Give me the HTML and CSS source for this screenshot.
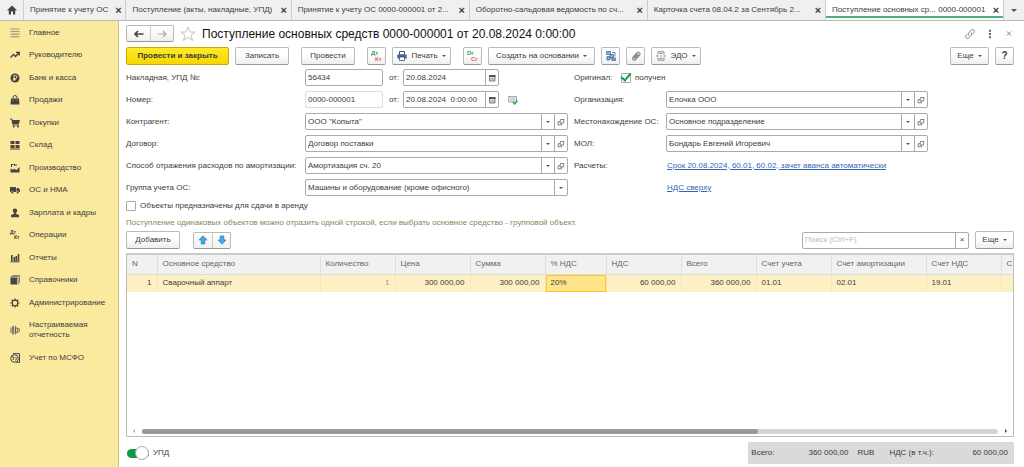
FILE: index.html
```html
<!DOCTYPE html>
<html lang="ru">
<head>
<meta charset="utf-8">
<title>Поступление основных средств 0000-000001</title>
<meta name="viewport" content="width=device-width, initial-scale=1">
<link rel="stylesheet" href="styles.css">
</head>
<body>
<svg class="sprite" aria-hidden="true">
  <symbol id="i-open" viewBox="0 0 8 8"><path d="M3.500 1.500H7L6.500 5H3zM2.800 3.500H1.300L1 6.800h3.500L4.800 5" fill="none" stroke="#666" stroke-width=".8"/></symbol>
  <symbol id="i-cal" viewBox="0 0 8 8"><path d="M1.500 1.500h5.500v5.500h-5.500z" fill="#ddd" stroke="#666" stroke-width=".8"/><path d="M1 1h6.500v2H1z" fill="#555"/><path d="M2.500 4.500h4M2.500 5.800h4" stroke="#888" stroke-width=".5"/></symbol>
</svg>
<nav class="tabs">
  <button class="tab-home" aria-label="Начальная страница"><svg class="ico" viewBox="0 0 10 10"><path d="M5 .5L.3 5l.7.7.8-.7V9.500h2.200V6.500h2v3h2.200V5l.8.7.7-.7z" fill="#444"/></svg></button>
  <div class="tab t1"><a href="#">Принятие к учету ОС</a><button class="x" aria-label="Закрыть">×</button></div>
  <div class="tab t2"><a href="#">Поступление (акты, накладные, УПД)</a><button class="x" aria-label="Закрыть">×</button></div>
  <div class="tab t3"><a href="#">Принятие к учету ОС 0000-000001 от 2...</a><button class="x" aria-label="Закрыть">×</button></div>
  <div class="tab t3"><a href="#">Оборотно-сальдовая ведомость по сч...</a><button class="x" aria-label="Закрыть">×</button></div>
  <div class="tab t3"><a href="#">Карточка счета 08.04.2 за Сентябрь 2...</a><button class="x" aria-label="Закрыть">×</button></div>
  <div class="tab t3 active"><a href="#">Поступление основных ср... 0000-000001</a><button class="x" aria-label="Закрыть">×</button></div>
  <button class="tab-more" aria-label="Все вкладки"><span class="caret big"></span></button>
</nav>
<div class="shell">
  <aside class="side">
    <a href="#"><svg class="ico" viewBox="0 0 10 10"><path d="M.5 1h9M.5 3.600h9M.5 6.200h9M.5 8.800h9" stroke="#777" stroke-width=".8"/></svg>Главное</a>
    <a href="#"><svg class="ico" viewBox="0 0 10 10"><path d="M.5 7.500L3.500 4.500l2 2L9 3M6 2.500h3.300v3" fill="none" stroke="#444" stroke-width="1.300"/></svg>Руководителю</a>
    <a href="#"><svg class="ico" viewBox="0 0 10 10"><circle cx="5" cy="5" r="4.500" fill="#444"/><path d="M4 8V2.500h1.500a1.400 1.400 0 0 1 0 3H3M3 6.700h3" fill="none" stroke="#faea9e" stroke-width=".9"/></svg>Банк и касса</a>
    <a href="#"><svg class="ico" viewBox="0 0 10 10"><path d="M1 3.500h8l.5 6h-9z" fill="#444"/><path d="M3 5V2.500a2 2 0 0 1 4 0V5" fill="none" stroke="#444"/><path d="M3 4.500v1M7 4.500v1" stroke="#faea9e" stroke-width=".7"/></svg>Продажи</a>
    <a href="#"><svg class="ico" viewBox="0 0 10 10"><path d="M0 1h1.800L3 7h6" fill="none" stroke="#444"/><path d="M2 2h8L8.800 6H2.800z" fill="#444"/><circle cx="3.700" cy="8.600" r="1" fill="#444"/><circle cx="8" cy="8.600" r="1" fill="#444"/></svg>Покупки</a>
    <a href="#"><svg class="ico" viewBox="0 0 10 10"><path d="M.5 1h4v3h-4zM5.500 1h4v3h-4zM.5 5h4v3h-4zM5.500 5h4v3h-4zM0 8.600h10v.9H0z" fill="#444"/></svg>Склад</a>
    <a href="#"><svg class="ico" viewBox="0 0 10 10"><path d="M.5 9.500V5.500L3.500 7V5.500l3 1.500L9.500 4v5.500z" fill="#444"/><path d="M1.500 4V1M1 1.500h2.500M4.500 1v2M5 2h2" stroke="#444"/></svg>Производство</a>
    <a href="#"><svg class="ico" viewBox="0 0 10 10"><path d="M0 2h6v5H0zM6.500 3h2L10 5v2H6.500z" fill="#444"/><circle cx="2.300" cy="7.500" r="1.200" fill="#444" stroke="#faea9e" stroke-width=".5"/><circle cx="7.700" cy="7.500" r="1.200" fill="#444" stroke="#faea9e" stroke-width=".5"/></svg>ОС и НМА</a>
    <a href="#"><svg class="ico" viewBox="0 0 10 10"><circle cx="5" cy="2.800" r="2.200" fill="#444"/><path d="M4 4.500h2v1.200l3 1.300v2.200H1V7l3-1.300z" fill="#444"/></svg>Зарплата и кадры</a>
    <a href="#"><span class="ops" aria-hidden="true"><i>Дт</i><i>Кт</i></span>Операции</a>
    <a href="#"><svg class="ico" viewBox="0 0 10 10"><path d="M1.800 2v6M4.300 4v4M6.300 3v5M8.500 1v7" stroke="#444" stroke-width="1.600"/><path d="M.5 8.800h9" stroke="#444"/></svg>Отчеты</a>
    <a href="#"><svg class="ico" viewBox="0 0 10 10"><path d="M.5 2.500h6.500v7H.5z" fill="#444"/><path d="M.5 2.300L2.500.5h7v7L7.500 9.500M1.500 1.600H8v7" fill="none" stroke="#666" stroke-width=".8"/></svg>Справочники</a>
    <a href="#"><svg class="ico" viewBox="0 0 10 10"><circle cx="5" cy="5" r="2.800" fill="none" stroke="#444" stroke-width="1.200"/><path d="M5 .4v1.800M5 7.800v1.800M.4 5h1.800M7.800 5h1.800M1.700 1.700L3 3M7 7l1.300 1.300M8.300 1.700L7 3M3 7L1.700 8.300" stroke="#444" stroke-width="1.200"/></svg>Администрирование</a>
    <a href="#" class="two"><svg class="ico" viewBox="0 0 10 10"><path d="M1 2.500v5.500M3 1c-.8 2-.8 6.500 0 8.500.8-2 .8-6.500 0-8.500zM5.300.8v8.700M5.500 2.500L9.300 4v2.500L5.500 8zM7.300 3v4.500" fill="none" stroke="#555" stroke-width=".8"/></svg>Настраиваемая отчетность</a>
    <a href="#"><svg class="ico" viewBox="0 0 10 10"><circle cx="4.500" cy="5.500" r="3.800" fill="none" stroke="#444"/><path d="M3 .6h6.500v8.800H6.500M2 3.500l2 1-1 2.500M5.500 4l1 1.500-1 2" fill="none" stroke="#444"/></svg>Учет по МСФО</a>
  </aside>
  <main class="doc">
    <header class="head">
      <div class="pair nav">
        <button aria-label="Назад"><svg class="arr" viewBox="0 0 10 8"><path d="M9.500 4H1M4 1L1 4l3 3" fill="none" stroke="#444" stroke-width="1.600"/></svg></button>
        <button aria-label="Вперед"><svg class="arr" viewBox="0 0 10 8"><path d="M.5 4H9M6 1l3 3-3 3" fill="none" stroke="#aaa" stroke-width="1.200"/></svg></button>
      </div>
      <button class="bare star" aria-label="В избранное"><svg viewBox="0 0 16 16"><path d="M8 1l2 5h5l-4 3.300 1.500 5.200L8 11.400l-4.500 3.100L5 9.300 1 6h5z" fill="none" stroke="#bbb" stroke-width=".9"/></svg></button>
      <h1>Поступление основных средств 0000-000001 от 20.08.2024 0:00:00</h1>
      <div class="wincmd">
        <button class="bare" aria-label="Ссылка"><svg class="ico link" viewBox="0 0 12 12"><path d="M5 7.500a2 2 0 0 1 0-3l2-2.200c2-2 4.500.4 2.800 2.400L8.500 6M7 4.500a2 2 0 0 1 0 3L5 9.700C3 11.700.5 9.300 2.200 7.300L3.500 6" fill="none" stroke="#777" stroke-width=".9"/></svg></button>
        <button class="bare" aria-label="Меню"><svg class="ico" viewBox="0 0 10 10"><path d="M4 .8h2v2H4zM4 4h2v2H4zM4 7.200h2v2H4z" fill="#666"/></svg></button>
        <button class="bare" aria-label="Закрыть"><svg class="ico" viewBox="0 0 10 10"><path d="M3 2.500l4 4M7 2.500l-4 4" stroke="#777" stroke-width=".9"/></svg></button>
      </div>
    </header>
    <div class="bar">
      <button class="btn primary">Провести и закрыть</button>
      <button class="btn b-save">Записать</button>
      <button class="btn b-post">Провести</button>
      <button class="btn sq dk" aria-label="Дт/Кт"><i>Дт</i><i>Кт</i></button>
      <button class="btn b-print"><svg class="ico" viewBox="0 0 10 10"><path d="M2.500.5h5V4h-5z" fill="#fff" stroke="#357"/><path d="M.3 3.500h9.400v4H.3z" fill="#47698f"/><path d="M2.500 6h5v3.500h-5z" fill="#fff" stroke="#357" stroke-width=".8"/></svg>Печать<span class="caret"></span></button>
      <button class="btn sq dk" aria-label="Dr/Cr"><i>Dr</i><i>Cr</i></button>
      <button class="btn b-base">Создать на основании<span class="caret"></span></button>
      <button class="btn sq" aria-label="Структура"><svg class="ico" viewBox="0 0 10 10"><path d="M.5.5h4v3h-4zM4 3.500h3.500v3H4zM6 7h3.500v2.500H6zM1 5.500h2.500V9H1z" fill="#8bb4d8" stroke="#3d6f9e" stroke-width=".8"/><path d="M6 1.500h3v4M3.500 8H6" fill="none" stroke="#3d6f9e" stroke-width=".8"/></svg></button>
      <button class="btn sq" aria-label="Файлы"><svg class="ico" viewBox="0 0 10 10"><path d="M1.500 7L6 1.800c1.500-1.500 4 .3 2.600 2.200L4.500 8.500C3 10 .8 8.600 2 7l4-4.500M3.500 7.500L7.300 3" fill="none" stroke="#888" stroke-width="1.200"/></svg></button>
      <button class="btn b-edo"><svg class="ico" viewBox="0 0 10 10"><path d="M2 3.500V.8h6v2.700M2 6.500v2.700h6V6.500M0 5h2.500M4 5h2M7.500 5H10M3.500 2.500h3M3.500 7.500h3" fill="none" stroke="#888"/></svg>ЭДО<span class="caret"></span></button>
      <span class="grow"></span>
      <button class="btn more">Еще<span class="caret"></span></button>
      <button class="btn sq q">?</button>
    </div>

    <form class="form">
      <label for="inv">Накладная, УПД №:</label>
      <div class="duo"><input id="inv" class="field" value="56434"><label for="invd">от:</label><span class="box"><input id="invd" value="20.08.2024"><button type="button" aria-label="Календарь"><svg class="mini"><use href="#i-cal"/></svg></button></span></div>
      <span class="lab">Оригинал:</span>
      <label class="chk orig"><input type="checkbox" checked><span>получен</span></label>

      <label for="num">Номер:</label>
      <div class="duo"><input id="num" class="field pale" value="0000-000001"><label for="numd">от:</label><span class="box"><input id="numd" value="20.08.2024  0:00:00"><button type="button" aria-label="Календарь"><svg class="mini"><use href="#i-cal"/></svg></button></span><svg class="ico stat" viewBox="0 0 10 10"><path d="M.5 1.500h8v5.500h-8z" fill="#e3eaf1" stroke="#9ab"/><path d="M2 3.300h5M2 5h5" stroke="#9ab" stroke-width=".6"/><path d="M5 7l1.700 2L9.500 5.500" fill="none" stroke="#2fae4e" stroke-width="1.500"/></svg></div>
      <label for="org">Организация:</label>
      <div class="box"><span class="pick"><select id="org"><option>Елочка ООО</option></select><span class="drop"></span></span><button type="button" aria-label="Открыть"><svg class="mini"><use href="#i-open"/></svg></button></div>

      <label for="ctr">Контрагент:</label>
      <div class="box"><span class="pick"><select id="ctr"><option>ООО "Копыта"</option></select><span class="drop"></span></span><button type="button" aria-label="Открыть"><svg class="mini"><use href="#i-open"/></svg></button></div>
      <label for="loc">Местонахождение ОС:</label>
      <div class="box"><span class="pick"><select id="loc"><option>Основное подразделение</option></select><span class="drop"></span></span><button type="button" aria-label="Открыть"><svg class="mini"><use href="#i-open"/></svg></button></div>

      <label for="dog">Договор:</label>
      <div class="box"><span class="pick"><select id="dog"><option>Договор поставки</option></select><span class="drop"></span></span><button type="button" aria-label="Открыть"><svg class="mini"><use href="#i-open"/></svg></button></div>
      <label for="mol">МОЛ:</label>
      <div class="box"><span class="pick"><select id="mol"><option>Бондарь Евгений Игоревич</option></select><span class="drop"></span></span><button type="button" aria-label="Открыть"><svg class="mini"><use href="#i-open"/></svg></button></div>

      <label for="exp">Способ отражения расходов по амортизации:</label>
      <div class="box"><span class="pick"><select id="exp"><option>Амортизация сч. 20</option></select><span class="drop"></span></span><button type="button" aria-label="Открыть"><svg class="mini"><use href="#i-open"/></svg></button></div>
      <span class="lab">Расчеты:</span>
      <a class="lnk" href="#">Срок 20.08.2024, 60.01, 60.02, зачет аванса автоматически</a>

      <label for="grp">Группа учета ОС:</label>
      <div class="box"><span class="pick"><select id="grp"><option>Машины и оборудование (кроме офисного)</option></select><span class="drop"></span></span></div>
      <span class="lab"></span>
      <a class="lnk" href="#">НДС сверху</a>
    </form>
    <label class="chk rent"><input type="checkbox"><span>Объекты предназначены для сдачи в аренду</span></label>
    <p class="hint">Поступление одинаковых объектов можно отразить одной строкой, если выбрать основное средство - групповой объект.</p>
    <div class="bar sub">
      <button class="btn b-add">Добавить</button>
      <div class="pair">
        <button aria-label="Вверх"><svg class="ico" viewBox="0 0 10 10"><path d="M5 .8l4 4.200H6.800V9H3.200V5H1z" fill="#3fa9ea" stroke="#2a7fb8" stroke-width=".7"/></svg></button>
        <button aria-label="Вниз"><svg class="ico" viewBox="0 0 10 10"><path d="M5 9.200L1 5h2.200V1h3.600v4H9z" fill="#3fa9ea" stroke="#2a7fb8" stroke-width=".7"/></svg></button>
      </div>
      <span class="grow"></span>
      <span class="box search"><input type="search" aria-label="Поиск" placeholder="Поиск (Ctrl+F)"><button type="button" aria-label="Очистить">×</button></span>
      <button class="btn more">Еще<span class="caret"></span></button>
    </div>
    <section class="grid">
      <table>
        <colgroup><col class="c30"><col><col class="c75"><col class="c75"><col class="c75"><col class="c61"><col class="c75"><col class="c75"><col class="c75"><col class="c95"><col class="c75"><col class="c12"></colgroup>
        <thead><tr><th>N</th><th>Основное средство</th><th>Количество</th><th>Цена</th><th>Сумма</th><th>% НДС</th><th>НДС</th><th>Всего</th><th>Счет учета</th><th>Счет амортизации</th><th>Счет НДС</th><th>С</th></tr></thead>
        <tbody><tr><td class="r">1</td><td>Сварочный аппарт</td><td class="r dim">1</td><td class="r">300 000,00</td><td class="r">300 000,00</td><td class="cur">20%</td><td class="r">60 000,00</td><td class="r">360 000,00</td><td>01.01</td><td>02.01</td><td>19.01</td><td></td></tr></tbody>
      </table>
      <div class="scroll"><span class="al"></span><div class="track"><div class="thumb"></div></div><span class="ar"></span></div>
    </section>
    <footer class="foot">
      <label class="toggle"><input type="checkbox" role="switch" checked><span>УПД</span></label>
      <div class="totals"><span>Всего:</span><output>360 000,00</output><span class="rub">RUB</span><span>НДС (в т.ч.):</span><output>60 000,00</output></div>
    </footer>
  </main>
</div>
</body>
</html>
```
FILE: styles.css
```css
* { box-sizing: border-box; }
body {
  margin: 0;
  min-height: 100vh;
  display: flex;
  flex-direction: column;
  background: #fff;
  color: #3c3c3c;
  font: 8px/12px "Liberation Sans", Arial, sans-serif;
}
button, input, select { font: inherit; color: inherit; margin: 0; padding: 0; border: 0; background: none; }
i { font-style: normal; }
a { color: inherit; text-decoration: none; }
.sprite { display: none; }
.ico { width: 10px; height: 10px; flex: none; display: block; }
.mini { width: 8px; height: 8px; display: block; }
.grow { flex: 1; }
.caret { width: 0; height: 0; border: 2px solid transparent; border-top-color: #555; border-bottom: 0; }
.caret.big { border-width: 3px; border-bottom: 0; }

/* Window tabs */
.tabs { display: flex; height: 21px; background: #f0f0f0; border-bottom: 1px solid #bbb; }
.tab-home { width: 24px; display: grid; place-items: center; border-right: 1px solid #ccc; }
.tab { display: flex; align-items: center; justify-content: space-between; min-width: 0; border-right: 1px solid #ccc; }
.tab a { flex: 1; min-width: 0; padding-left: 6px; overflow: hidden; white-space: nowrap; }
.t1 { flex: 102 1 0; }
.t2 { flex: 165 1 0; }
.t3 { flex: 178 1 0; }
.tab.active { background: #fff; box-shadow: inset 0 -2px #fff, inset 0 -4px #4db37e; }
.x { width: 14px; font-weight: bold; font-size: 11px; }
.tab-more { width: 20px; display: grid; place-items: center; }

.shell { flex: 1; display: flex; }

/* Sections panel */
.side { width: 119px; flex: none; padding-top: 1px; background: #faea9e; border-right: 1px solid #ccc08a; }
.side a { display: flex; align-items: center; gap: 9px; height: 22px; padding: 0 4px 0 10px; line-height: 10px; }
.side a:nth-child(even) { margin-bottom: 1px; }
.side a.two { height: 32px; }
.ops { width: 10px; display: flex; flex-direction: column; font: bold 5px/5px "Liberation Sans", Arial, sans-serif; }
.ops i + i { padding-left: 4px; }

/* Document */
.doc { flex: 1; min-width: 0; display: flex; flex-direction: column; padding: 4px 10px 3px 7px; }
.head { display: flex; align-items: center; height: 17px; }
.pair { display: flex; height: 17px; border: 1px solid #bbb; border-bottom-color: #999; border-radius: 2px; background: linear-gradient(#fff, #f0f0f0); }
.pair button { width: 18px; display: grid; place-items: center; }
.pair button + button { border-left: 1px solid #ccc; }
.nav button { width: 23px; }
.arr { width: 10px; height: 8px; }
.bare { display: grid; place-items: center; }
.star { width: 28px; }
.star svg { width: 16px; height: 16px; }
h1 { flex: 1; margin: 0; color: #111; font-size: 12px; font-weight: normal; line-height: 16px; white-space: nowrap; }
.wincmd { display: flex; gap: 9px; }
.link { width: 12px; height: 12px; }

.bar { display: flex; align-items: center; gap: 6px; margin-top: 5px; }
.btn { display: flex; align-items: center; justify-content: center; gap: 4px; height: 18px; border: 1px solid #bbb; border-bottom-color: #999; border-radius: 2px; background: linear-gradient(#fff 40%, #eee); white-space: nowrap; }
.primary { width: 103px; border-color: #c9a800; background: linear-gradient(#ffe92b, #f5d800); font-weight: bold; }
.b-save { width: 54px; }
.b-post { width: 54px; margin-left: 6px; }
.b-print { width: 59px; }
.b-base { width: 107px; }
.b-edo { width: 50px; }
.more { width: 39px; }
.sq { width: 19px; }
.q { font-weight: bold; font-size: 10px; }
.dk { flex-direction: column; align-items: stretch; gap: 0; font: bold 6px/6px "Liberation Sans", Arial, sans-serif; color: #3a9c6a; text-align: left; padding-left: 3px; }
.dk i + i { color: #e06060; padding-left: 4px; }
.bar .dk { margin-left: 6px; }

/* Document fields */
.form { display: grid; grid-template-columns: 179px minmax(0, 263fr) 98px minmax(0, 262fr) 86px; grid-auto-rows: 17px; align-items: center; gap: 5px 0; margin-top: 4px; }
.form > :nth-child(4n + 1) { grid-column: 1; }
.form > :nth-child(4n + 3) { padding-left: 6px; }
.form label, .lab, .lnk { white-space: nowrap; }
.duo { display: grid; grid-template-columns: 78px 20px 96px auto; align-items: center; justify-content: start; }
.field, .box { height: 17px; border: 1px solid #aaa; border-radius: 2px; }
.field { width: 78px; padding: 0 2px; }
.pale { border-color: #ddd; }
.duo > label { padding-left: 6px; }
.stat { margin-left: 9px; }
.box { display: flex; background: #fff; }
.box input { flex: 1; min-width: 0; padding: 0 2px; white-space: pre; outline: 0; }
.box > button { width: 13px; display: grid; place-items: center; border-left: 1px solid #aaa; }
.pick { flex: 1; display: grid; grid-template-columns: 1fr 13px; }
.pick select { grid-area: 1 / 1 / 2 / 3; appearance: none; padding: 0 2px; }
.drop { grid-area: 1 / 2; display: grid; place-items: center; border-left: 1px solid #aaa; pointer-events: none; }
.drop::after { content: ""; border: 2px solid transparent; border-top-color: #555; border-bottom: 0; }
.lnk { color: #3367b5; text-decoration: underline; padding-left: 1px; }

.chk { display: flex; align-items: center; gap: 4px; }
.chk input { appearance: none; width: 10px; height: 10px; border: 1px solid #aaa; border-radius: 1px; display: grid; place-items: center; }
.chk input:checked::after { content: ""; width: 4px; height: 8px; margin-top: -4px; border: solid #12a050; border-width: 0 2px 2px 0; transform: rotate(40deg); }
.form .orig { margin-left: -45px; }
.rent { margin-top: 3px; height: 14px; }
.hint { margin: 4px 0 2px; color: #8b8360; }
.sub { margin-top: 0; }
.b-add { width: 54px; }
.sub .pair { margin-left: 7px; }
.search { width: 167px; }
.search input::placeholder { color: #bbb; opacity: 1; }

/* Table part */
.grid { flex: 1; display: flex; flex-direction: column; justify-content: space-between; margin-top: 4px; border: 1px solid #bbb; border-top: 2px solid #ccc; overflow: hidden; }
table { width: 100%; border-collapse: collapse; table-layout: fixed; }
.c12 { width: 12px; }
.c30 { width: 30px; }
.c61 { width: 61px; }
.c75 { width: 75px; }
.c95 { width: 95px; }
th, td { padding: 0 5px; text-align: left; white-space: nowrap; overflow: hidden; border-right: 1px solid #ddd; }
th { height: 19px; background: #f1f1f1; color: #666; font-weight: normal; border-bottom: 1px solid #ddd; }
td { height: 18px; background: #fdf0c4; border-right-color: #f6e6b4; }
th:last-child, td:last-child { border-right: 0; }
.r { text-align: right; }
.dim { color: #999; }
.cur { background: #ffe48c; box-shadow: inset 0 0 0 1px #fbc91f; }
.scroll { display: flex; align-items: center; gap: 7px; height: 10px; padding: 0 6px; }
.track { flex: 1; height: 5px; border-radius: 3px; background: #d5d5d5; }
.thumb { width: 72%; height: 5px; border-radius: 3px; background: #999; }
.al, .ar { border: 2px solid transparent; }
.al { border-right-color: #aaa; border-left: 0; }
.ar { border-left-color: #444; border-right: 0; }

.foot { display: flex; align-items: center; justify-content: space-between; margin-top: 5px; }
.toggle { display: flex; align-items: center; gap: 4px; padding-left: 1px; }
.toggle input { appearance: none; width: 22px; height: 9px; border-radius: 5px; background: #0a9a4a; display: flex; justify-content: flex-end; align-items: center; }
.toggle input::after { content: ""; width: 12px; height: 12px; flex: none; border: 1px solid #aaa; border-radius: 50%; background: #fff; }
.totals { display: flex; align-items: center; height: 22px; padding: 0 6px 0 3px; background: #dadada; }
.totals output { width: 74px; text-align: right; }
.rub { margin: 0 15px 0 9px; }
```
